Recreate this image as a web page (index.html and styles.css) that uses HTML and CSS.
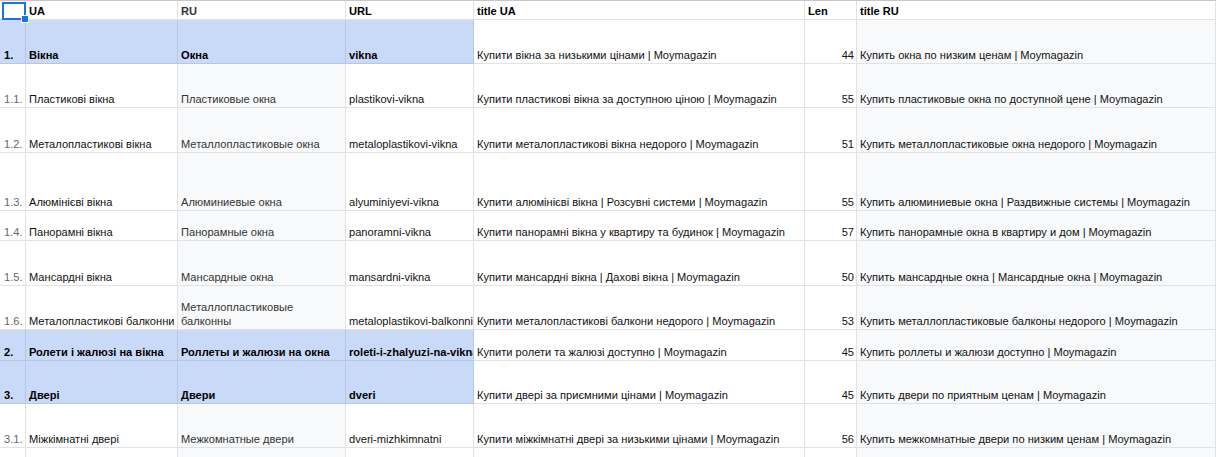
FILE: index.html
```html
<!DOCTYPE html>
<html lang="uk">
<head>
<meta charset="utf-8">
<title>Sheet</title>
<link rel="stylesheet" href="styles.css">
</head>
<body>
<div class="sheet">
  <div class="c a hdr"><span class="sel"><span class="handle"></span></span></div>
  <div class="c b hdr bold">UA</div>
  <div class="c ru hdr bold">RU</div>
  <div class="c hdr bold">URL</div>
  <div class="c hdr bold">title UA</div>
  <div class="c hdr bold">Len</div>
  <div class="c hdr bold">title RU</div>

  <div class="c a blue bold">1.</div>
  <div class="c blue bold">Вікна</div>
  <div class="c blue bold">Окна</div>
  <div class="c blue bold">vikna</div>
  <div class="c">Купити вікна за низькими цінами | Moymagazin</div>
  <div class="c num">44</div>
  <div class="c gray">Купить окна по низким ценам | Moymagazin</div>

  <div class="c a">1.1.</div>
  <div class="c">Пластикові вікна</div>
  <div class="c ru gray">Пластиковые окна</div>
  <div class="c">plastikovi-vikna</div>
  <div class="c">Купити пластикові вікна за доступною ціною | Moymagazin</div>
  <div class="c num">55</div>
  <div class="c gray">Купить пластиковые окна по доступной цене | Moymagazin</div>

  <div class="c a">1.2.</div>
  <div class="c">Металопластикові вікна</div>
  <div class="c ru gray">Металлопластиковые окна</div>
  <div class="c">metaloplastikovi-vikna</div>
  <div class="c">Купити металопластикові вікна недорого | Moymagazin</div>
  <div class="c num">51</div>
  <div class="c gray">Купить металлопластиковые окна недорого | Moymagazin</div>

  <div class="c a">1.3.</div>
  <div class="c">Алюмінієві вікна</div>
  <div class="c ru gray">Алюминиевые окна</div>
  <div class="c">alyuminiyevi-vikna</div>
  <div class="c">Купити алюмінієві вікна | Розсувні системи | Moymagazin</div>
  <div class="c num">55</div>
  <div class="c gray">Купить алюминиевые окна | Раздвижные системы | Moymagazin</div>

  <div class="c a">1.4.</div>
  <div class="c">Панорамні вікна</div>
  <div class="c ru gray">Панорамные окна</div>
  <div class="c">panoramni-vikna</div>
  <div class="c">Купити панорамні вікна у квартиру та будинок | Moymagazin</div>
  <div class="c num">57</div>
  <div class="c gray">Купить панорамные окна в квартиру и дом | Moymagazin</div>

  <div class="c a">1.5.</div>
  <div class="c">Мансардні вікна</div>
  <div class="c ru gray">Мансардные окна</div>
  <div class="c">mansardni-vikna</div>
  <div class="c">Купити мансардні вікна | Дахові вікна | Moymagazin</div>
  <div class="c num">50</div>
  <div class="c gray">Купить мансардные окна | Мансардные окна | Moymagazin</div>

  <div class="c a">1.6.</div>
  <div class="c">Металопластикові балконни</div>
  <div class="c ru gray wrap">Металлопластиковые балконны</div>
  <div class="c">metaloplastikovi-balkonni</div>
  <div class="c">Купити металопластикові балкони недорого | Moymagazin</div>
  <div class="c num">53</div>
  <div class="c gray">Купить металлопластиковые балконы недорого | Moymagazin</div>

  <div class="c a blue bold">2.</div>
  <div class="c blue bold">Ролети і жалюзі на вікна</div>
  <div class="c blue bold">Роллеты и жалюзи на окна</div>
  <div class="c blue bold">roleti-i-zhalyuzi-na-vikna</div>
  <div class="c">Купити ролети та жалюзі доступно | Moymagazin</div>
  <div class="c num">45</div>
  <div class="c gray">Купить роллеты и жалюзи доступно | Moymagazin</div>

  <div class="c a blue bold">3.</div>
  <div class="c blue bold">Двері</div>
  <div class="c blue bold">Двери</div>
  <div class="c blue bold">dveri</div>
  <div class="c">Купити двері за приємними цінами | Moymagazin</div>
  <div class="c num">45</div>
  <div class="c gray">Купить двери по приятным ценам | Moymagazin</div>

  <div class="c a">3.1.</div>
  <div class="c">Міжкімнатні двері</div>
  <div class="c ru gray">Межкомнатные двери</div>
  <div class="c">dveri-mizhkimnatni</div>
  <div class="c">Купити міжкімнатні двері за низькими цінами | Moymagazin</div>
  <div class="c num">56</div>
  <div class="c gray">Купить межкомнатные двери по низким ценам | Moymagazin</div>

  <div class="c a"></div>
  <div class="c"></div>
  <div class="c ru gray"></div>
  <div class="c"></div>
  <div class="c"></div>
  <div class="c"></div>
  <div class="c gray"></div>
</div>
</body>
</html>
```

FILE: styles.css
```css
html, body {
  margin: 0;
  padding: 0;
  background: #ffffff;
  overflow: hidden;
}

.sheet {
  display: grid;
  grid-template-columns: 26px 152px 168px 128px 331px 52px 359px;
  grid-template-rows: 19px 44px 44px 45px 58px 30px 45px 44px 31px 43px 44px 44px;
  border-top: 1px solid #c7c7c7;
  font-family: Arial, "Liberation Sans", sans-serif;
  font-size: 11.1px;
  color: #111111;
  width: 1216px;
}

.c {
  box-sizing: border-box;
  border-right: 1px solid #e2e2e3;
  border-bottom: 1px solid #e2e2e3;
  padding: 0 2px 0 3px;
  display: flex;
  align-items: flex-end;
  white-space: nowrap;
  overflow: hidden;
  line-height: 15px;
  min-width: 0;
}

.a {
  color: #666666;
  padding-left: 4px;
}

.hdr {
  color: #000000;
  background: #ffffff;
}

.bold {
  font-weight: bold;
  color: #000000;
}

.gray {
  background: #f8f9fa;
}

.ru {
  color: #333333;
}

.hdr.ru {
  background: #ffffff;
}

.blue {
  background: #c9daf8;
  border-right-color: #b6c8e8;
  border-bottom-color: #b6c8e8;
}

.num {
  justify-content: flex-end;
}

.wrap {
  white-space: normal;
  line-height: 14px;
  padding-bottom: 1px;
}

.a.hdr {
  position: relative;
  overflow: visible;
}

.sel {
  position: absolute;
  left: 2px;
  top: 1px;
  width: 24px;
  height: 18px;
  box-sizing: border-box;
  border: 2px solid #1a73e8;
  z-index: 2;
}

.handle {
  position: absolute;
  right: -5px;
  bottom: -5px;
  width: 6px;
  height: 6px;
  background: #1a73e8;
  border: 1px solid #ffffff;
  box-sizing: content-box;
}
```
